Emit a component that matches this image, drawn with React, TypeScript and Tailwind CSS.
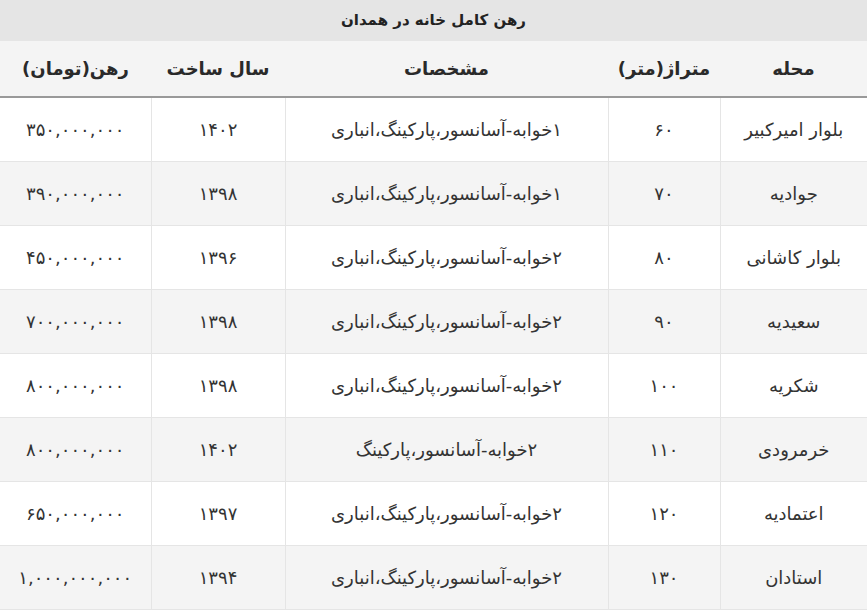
import React from 'react';

const rows = [
  { area: 'بلوار امیرکبیر', size: '۶۰', spec: '۱خوابه-آسانسور،پارکینگ،انباری', year: '۱۴۰۲', price: '۳۵۰,۰۰۰,۰۰۰' },
  { area: 'جوادیه', size: '۷۰', spec: '۱خوابه-آسانسور،پارکینگ،انباری', year: '۱۳۹۸', price: '۳۹۰,۰۰۰,۰۰۰' },
  { area: 'بلوار کاشانی', size: '۸۰', spec: '۲خوابه-آسانسور،پارکینگ،انباری', year: '۱۳۹۶', price: '۴۵۰,۰۰۰,۰۰۰' },
  { area: 'سعیدیه', size: '۹۰', spec: '۲خوابه-آسانسور،پارکینگ،انباری', year: '۱۳۹۸', price: '۷۰۰,۰۰۰,۰۰۰' },
  { area: 'شکریه', size: '۱۰۰', spec: '۲خوابه-آسانسور،پارکینگ،انباری', year: '۱۳۹۸', price: '۸۰۰,۰۰۰,۰۰۰' },
  { area: 'خرمرودی', size: '۱۱۰', spec: '۲خوابه-آسانسور،پارکینگ', year: '۱۴۰۲', price: '۸۰۰,۰۰۰,۰۰۰' },
  { area: 'اعتمادیه', size: '۱۲۰', spec: '۲خوابه-آسانسور،پارکینگ،انباری', year: '۱۳۹۷', price: '۶۵۰,۰۰۰,۰۰۰' },
  { area: 'استادان', size: '۱۳۰', spec: '۲خوابه-آسانسور،پارکینگ،انباری', year: '۱۳۹۴', price: '۱,۰۰۰,۰۰۰,۰۰۰' },
];

export default function App() {
  return (
    <div dir="rtl" className="w-[867px] bg-white text-[#333] font-['DejaVu_Sans',sans-serif]">
      {/* Title */}
      <div className="h-[41px] bg-[#e5e5e5] flex items-center justify-center text-[15px] font-bold text-[#222]">
        رهن کامل خانه در همدان
      </div>

      <table className="w-full table-fixed border-collapse">
        <colgroup>
          <col className="w-[147px]" />
          <col className="w-[112px]" />
          <col className="w-[323px]" />
          <col className="w-[134px]" />
          <col className="w-[151px]" />
        </colgroup>
        <thead>
          <tr className="h-[56px] bg-[#f4f4f4] border-b-2 border-[#999] text-[18px] text-[#2a2a2a]">
            <th className="font-bold">محله</th>
            <th className="font-bold">متراژ(متر)</th>
            <th className="font-bold">مشخصات</th>
            <th className="font-bold">سال ساخت</th>
            <th className="font-bold">رهن(تومان)</th>
          </tr>
        </thead>
        <tbody>
          {rows.map((r, i) => (
            <tr key={i} className={`h-[64px] text-[18px] ${i % 2 === 1 ? 'bg-[#f4f4f4]' : 'bg-white'}`}>
              <td className="border border-[#e5e5e5] border-r-0 text-center">{r.area}</td>
              <td className="border border-[#e5e5e5] text-center">{r.size}</td>
              <td className="border border-[#e5e5e5] text-center">{r.spec}</td>
              <td className="border border-[#e5e5e5] text-center">{r.year}</td>
              <td className="border border-[#e5e5e5] border-l-0 text-center">{r.price}</td>
            </tr>
          ))}
        </tbody>
      </table>
    </div>
  );
}
